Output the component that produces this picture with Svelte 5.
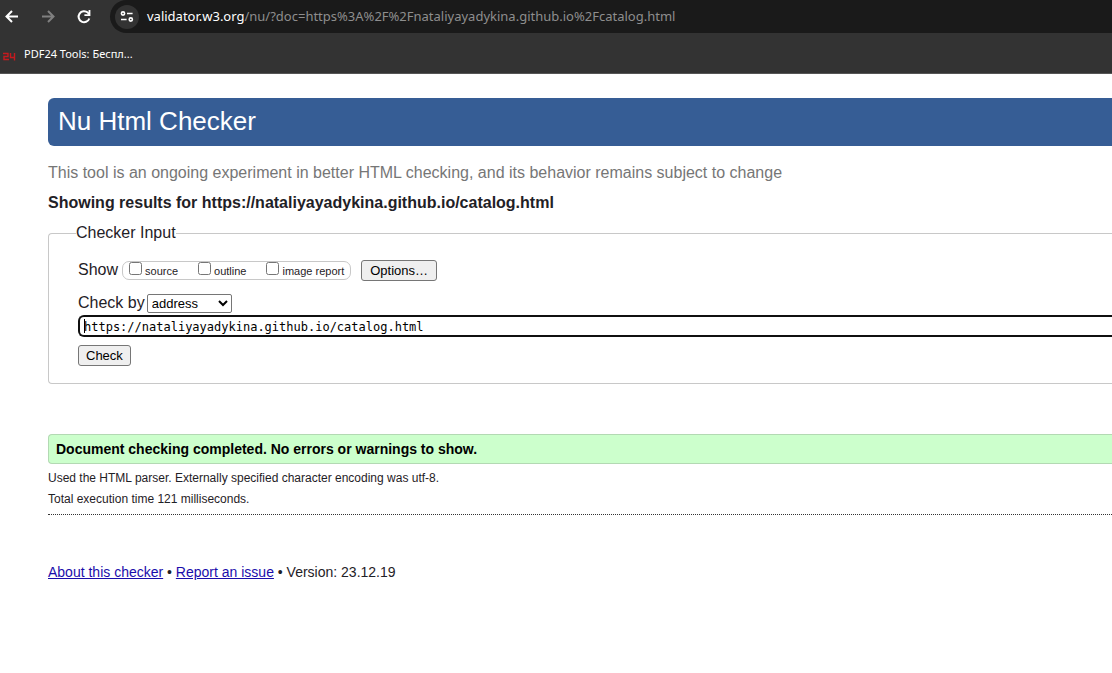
<script>
  let method = $state('address');
  let address = $state('https://nataliyayadykina.github.io/catalog.html');
  const views = ['source', 'outline', 'image report'];
</script>

<div class="browser">
  <div class="toolbar">
    <button class="nav" aria-label="Back">
      <svg width="16" height="16" viewBox="0 0 16 16"><path d="M14 7.5H3M8 2 2.5 7.5 8 13" /></svg>
    </button>
    <button class="nav dim" aria-label="Forward">
      <svg width="16" height="16" viewBox="0 0 16 16"><path d="M2 7.5H13M8 2 13.5 7.5 8 13" /></svg>
    </button>
    <button class="nav" aria-label="Reload">
      <svg width="16" height="16" viewBox="0 0 16 16"><path d="M13.3 9.5A5.5 5.5 0 1 1 11.8 3.6L13.4 5.4" /><path class="solid" d="M14.4 1V7H8.4V5.2H12.6V1Z" /></svg>
    </button>
    <div class="omnibox">
      <button class="site" aria-label="Site information">
        <svg width="14" height="12" viewBox="0 0 14 12"><circle cx="3" cy="2.5" r="1.6" /><path d="M7 2.5H12.6M1 8.5H6.6" /><circle cx="10.8" cy="8.5" r="1.6" /></svg>
      </button>
      <span class="url"><b>validator.w3.org</b>/nu/?doc=https%3A%2F%2Fnataliyayadykina.github.io%2Fcatalog.html</span>
    </div>
  </div>
  <div class="bookmarks">
    <a href="#pdf24">
      <svg width="13" height="9" viewBox="0 0 13 9"><path d="M0 1.5H5V4.5H1V7.5H6M7.5 1V5.5H12M11.5 1V8.5" /></svg>
      PDF24 Tools: Беспл...
    </a>
  </div>
</div>

<main>
  <h1>Nu Html Checker</h1>
  <p class="note">This tool is an ongoing experiment in better HTML checking, and its behavior remains subject to change</p>
  <h2>Showing results for https://nataliyayadykina.github.io/catalog.html</h2>

  <form onsubmit={(e) => e.preventDefault()}>
    <fieldset class="checker">
      <legend>Checker Input</legend>
      <div class="fields">
        <div class="row show">
          <span>Show</span>
          <div class="views">
            {#each views as view}
              <label><input type="checkbox" /><span>{view}</span></label>
            {/each}
          </div>
          <button type="button">Options…</button>
        </div>
        <div class="row method">
          <label for="method">Check by</label>
          <select id="method" bind:value={method}>
            <option value="address">address</option>
            <option value="file">file upload</option>
            <option value="text">text input</option>
          </select>
        </div>
        <div class="address">
          <input type="url" aria-label="Address" bind:value={address} />
          <i class="caret"></i>
        </div>
        <button type="submit">Check</button>
      </div>
    </fieldset>
  </form>

  <p class="success">Document checking completed. No errors or warnings to show.</p>
  <div class="details">
    <p>Used the HTML parser. Externally specified character encoding was utf-8.</p>
    <p>Total execution time 121 milliseconds.</p>
  </div>
  <footer><a href="#about">About this checker</a> • <a href="#issue">Report an issue</a> • Version: 23.12.19</footer>
</main>

<style>
  :global(body) {
    background: #fff;
    color: #1f2126;
    font-family: "Liberation Sans", Arial, sans-serif;
    overflow-x: hidden;
  }

  h1, h2, p { margin: 0; }

  .browser {
    background: #333;
    border-bottom: 1px solid #555;
    font-family: "Noto Sans", "Segoe UI", sans-serif;
  }
  .toolbar {
    display: flex;
    align-items: center;
    height: 33px;
    padding-left: 4px;
  }
  .nav {
    display: flex;
    width: 16px;
    height: 16px;
    margin-right: 20px;
    padding: 0;
    border: 0;
    background: none;
  }
  .nav svg { fill: none; stroke: #fff; stroke-width: 2; }
  .nav .solid { fill: #fff; stroke: none; }
  .dim svg { stroke: #808080; }
  .nav + .omnibox { margin-left: -2px; }
  .omnibox {
    display: flex;
    flex: 1;
    align-items: center;
    gap: 8px;
    height: 33px;
    padding-left: 5px;
    border-radius: 17px 0 0 17px;
    background: #1a1a1a;
  }
  .site {
    display: flex;
    align-items: center;
    justify-content: center;
    width: 24px;
    height: 24px;
    padding: 0;
    border: 0;
    border-radius: 50%;
    background: #333;
  }
  .site svg { fill: none; stroke: #fff; stroke-width: 1.6; }
  .url {
    color: #8e8e8e;
    font-size: 13px;
    line-height: 18px;
    padding-bottom: 2px;
    white-space: nowrap;
  }
  .url b { color: #fff; font-weight: 400; }
  .bookmarks {
    display: flex;
    align-items: center;
    height: 40px;
  }
  .bookmarks a {
    display: flex;
    align-items: center;
    gap: 8px;
    padding-left: 3px;
    color: #fff;
    font-size: 11px;
    text-decoration: none;
  }
  .bookmarks svg { margin-top: 6px; fill: none; stroke: #c51a1f; stroke-width: 1.4; }

  main { padding: 24px 0 24px 48px; }
  h1 {
    padding: 0 10px 2px;
    border-radius: 6px 0 0 6px;
    background: #365d95;
    color: #fff;
    font-size: 26px;
    font-weight: 400;
    line-height: 46px;
  }
  .note {
    margin-top: 17px;
    color: #767676;
    font-size: 16px;
    line-height: 20px;
  }
  h2 {
    margin-top: 10px;
    font-size: 16px;
    line-height: 20px;
  }
  .checker {
    min-width: 0;
    margin: 10px 0 0;
    padding: 0 0 17px 27px;
    border: 1px solid #c8c8c8;
    border-right: 0;
    border-radius: 4px 0 0 4px;
  }
  legend {
    padding: 0;
    font-size: 16px;
    line-height: 20px;
  }
  .fields { padding: 16px 0 0 2px; }
  .row { display: flex; align-items: center; font-size: 16px; }
  .show { height: 22px; }
  .views {
    display: flex;
    gap: 20px;
    align-items: center;
    box-sizing: border-box;
    height: 19px;
    margin: 0 10px 0 4px;
    padding: 0 6px;
    border: 1px solid #c8c8c8;
    border-radius: 7px;
    font-size: 11px;
  }
  .views label { display: flex; align-items: center; gap: 3px; line-height: 17px; }
  .views span { padding-top: 2px; }
  .views input { width: 13px; height: 13px; margin: 0 0 4px; }
  .fields button {
    box-sizing: border-box;
    height: 21px;
    padding: 0 7px;
    border: 1px solid #767676;
    border-radius: 3px;
    background: #efefef;
    color: #000;
    font: 13px "Liberation Sans", Arial, sans-serif;
  }
  .fields .show button { padding: 0 8px; }
  .method { gap: 2px; height: 20px; margin-top: 12px; }
  select {
    box-sizing: border-box;
    width: 85px;
    height: 19px;
    border: 1px solid #767676;
    border-radius: 2px;
    background: #fff;
    color: #000;
    font: 13px "Liberation Sans", Arial, sans-serif;
  }
  .address { position: relative; margin: 2px 0 8px; }
  .address input {
    display: block;
    box-sizing: border-box;
    width: 100%;
    height: 22px;
    padding: 2px 4px 0;
    border: 2px solid #101010;
    border-right: 0;
    border-radius: 6px 0 0 6px;
    outline: 0;
    background: #fff;
    color: #000;
    font: 12px "DejaVu Sans Mono", Consolas, monospace;
  }
  .caret {
    position: absolute;
    top: 4px;
    left: 6px;
    width: 1px;
    height: 14px;
    background: #000;
  }
  .success {
    margin-top: 50px;
    padding: 0 7px;
    border: 1px solid #b3d9b3;
    border-right: 0;
    border-radius: 4px 0 0 4px;
    background: #cfc;
    color: #000;
    font-size: 14px;
    font-weight: 700;
    line-height: 28px;
  }
  .details {
    padding: 4px 0;
    border-bottom: 1px dotted #333;
    font-size: 12px;
    line-height: 21px;
  }
  footer { margin-top: 47px; font-size: 14px; line-height: 20px; }
  footer a { color: #1a0dab; }
</style>
